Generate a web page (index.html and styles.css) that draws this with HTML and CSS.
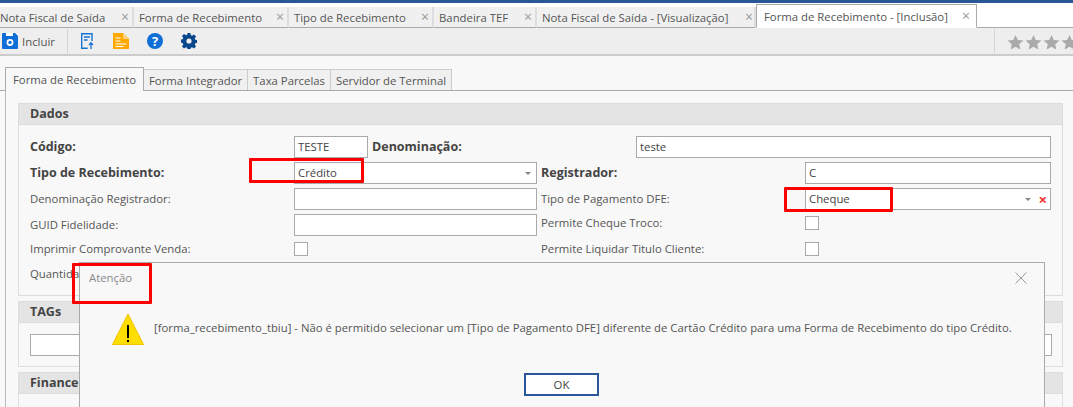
FILE: index.html
```html
<!DOCTYPE html>
<html lang="pt">
<head>
<meta charset="utf-8">
<title>Forma de Recebimento</title>
<link rel="stylesheet" href="styles.css">
</head>
<body>
<div class="app">
  <div class="topbar"></div>
  <nav class="doc-tabs">
    <div class="doc-tab t1"><span>Nota Fiscal de Saída</span><i class="x">×</i></div>
    <div class="doc-tab t2"><span>Forma de Recebimento</span><i class="x">×</i></div>
    <div class="doc-tab t3"><span>Tipo de Recebimento</span><i class="x">×</i></div>
    <div class="doc-tab t4"><span>Bandeira TEF</span><i class="x">×</i></div>
    <div class="doc-tab t5"><span>Nota Fiscal de Saída - [Visualização]</span><i class="x">×</i></div>
    <div class="doc-tab t6 active"><span>Forma de Recebimento - [Inclusão]</span><i class="x">×</i></div>
  </nav>
  <div class="toolbar">
    <button class="tool include">
      <svg width="16" height="16" viewBox="0 0 16 16"><path d="M0 1A1 1 0 0 1 1 0H13l3 3v12a1 1 0 0 1-1 1H1a1 1 0 0 1-1-1z" fill="#0f6fd6"/><rect x="4" y="0" width="7" height="3" fill="#fff"/><circle cx="8" cy="9.500" r="2.600" fill="none" stroke="#fff" stroke-width="1.700"/></svg>
      <span>Incluir</span>
    </button>
    <div class="sep"></div>
    <svg class="ic ic-doc" width="13" height="16" viewBox="0 0 13 16"><path d="M11 8V.7H.7v14.600h6" fill="none" stroke="#1a73d2" stroke-width="1.400"/><path d="M3 4h6M3 7h3.500" stroke="#1a73d2" stroke-width="1.400"/><path d="M10 16V10M8 12l2-2.200 2 2.200" fill="none" stroke="#1a73d2" stroke-width="1.300"/></svg>
    <svg class="ic ic-note" width="16" height="16" viewBox="0 0 16 16"><path d="M0 0h10l6 6v10H0z" fill="#ffa800"/><path d="M10 0v6h6z" fill="#ffd27a"/><path d="M2.500 5h5M2.500 8h5M2.500 11h11M2.500 13.500h8" stroke="#fff" stroke-width="1"/></svg>
    <svg class="ic ic-help" width="16" height="16" viewBox="0 0 16 16"><circle cx="8" cy="8" r="8" fill="#0f6fd6"/><text x="8" y="12.500" text-anchor="middle" class="qm">?</text></svg>
    <svg class="ic ic-gear" width="16" height="16" viewBox="0 0 16 16"><path d="M6.600 0h2.800l.4 2.200 1.300.6 1.900-1.300 2 2-1.300 1.900.6 1.300 2.200.4v2.800l-2.200.4-.6 1.300 1.300 1.900-2 2-1.900-1.300-1.300.6-.4 2.200H6.600l-.4-2.200-1.300-.6-1.900 1.300-2-2 1.300-1.900-.6-1.300L-.5 9.400V6.600l2.200-.4.600-1.300L1 3l2-2 1.900 1.300 1.300-.6z" fill="#08478c"/><circle cx="8" cy="8" r="2.600" fill="#eee"/></svg>
    <div class="spacer"></div>
    <div class="sep sep-right"></div>
    <svg class="stars" width="66" height="14" viewBox="0 0 66 14"><defs><path id="star" d="M8.500 0l2.300 5 5.700.6-4.300 3.700 1.300 5.400-5-2.900-5 2.900 1.300-5.400L.5 5.600 6.200 5z" fill="#aaa"/></defs><use href="#star"/><use href="#star" x="18"/><use href="#star" x="36"/><use href="#star" x="54"/></svg>
  </div>
  <main class="content">
    <div class="form-tabs">
      <div class="form-tab active">Forma de Recebimento</div>
      <div class="form-tab">Forma Integrador</div>
      <div class="form-tab">Taxa Parcelas</div>
      <div class="form-tab">Servidor de Terminal</div>
    </div>
    <div class="pane">
      <section class="panel dados">
        <h2 class="panel-head">Dados</h2>
        <div class="form">
          <div class="row">
            <label class="lbl strong">Código:</label>
            <div class="input code">TESTE</div>
            <label class="lbl strong denom">Denominação:</label>
            <div class="input denom-input">teste</div>
          </div>
          <div class="row">
            <label class="lbl strong">Tipo de Recebimento:</label>
            <div class="input field select">Crédito<i class="caret"></i></div>
            <label class="lbl strong right">Registrador:</label>
            <div class="input field-r">C</div>
          </div>
          <div class="row">
            <label class="lbl">Denominação Registrador:</label>
            <div class="input field"></div>
            <label class="lbl right">Tipo de Pagamento DFE:</label>
            <div class="input field-r select">Cheque<i class="caret clr"></i><i class="clear">×</i></div>
          </div>
          <div class="row">
            <label class="lbl">GUID Fidelidade:</label>
            <div class="input field"></div>
            <label class="lbl right up">Permite Cheque Troco:</label>
            <div class="check-cell"><div class="check"></div></div>
          </div>
          <div class="row">
            <label class="lbl up">Imprimir Comprovante Venda:</label>
            <div class="check-cell left"><div class="check"></div></div>
            <label class="lbl right up">Permite Liquidar Titulo Cliente:</label>
            <div class="check-cell"><div class="check"></div></div>
          </div>
          <div class="row row-last">
            <label class="lbl">Quantidade:</label>
          </div>
        </div>
      </section>
      <section class="panel tags">
        <h2 class="panel-head">TAGs</h2>
        <div class="tags-body"><div class="input tag-input"></div></div>
      </section>
      <section class="panel fin">
        <h2 class="panel-head">Financeiro</h2>
      </section>
    </div>
  </main>
  <div class="dialog">
    <div class="dlg-title">Atenção</div>
    <svg class="dlg-close" width="12" height="12" viewBox="0 0 12 12"><path d="M.5.5l11 11M11.500.5l-11 11" stroke="#999" stroke-width="1"/></svg>
    <div class="dlg-msg">
      <svg class="warn" width="32" height="32" viewBox="0 0 32 32"><path d="M16 1L31.500 31.500H.5z" fill="#ffde00" stroke="#f3c300" stroke-width="1"/><path d="M16 12v13" stroke="#000" stroke-width="2"/><circle cx="16" cy="28" r="1.200" fill="#000"/></svg>
      <p>[forma_recebimento_tbiu] - Não é permitido selecionar um [Tipo de Pagamento DFE] diferente de Cartão Crédito para uma Forma de Recebimento do tipo Crédito.</p>
    </div>
    <div class="dlg-actions"><button class="ok">OK</button></div>
  </div>
  <div class="mark m1"></div>
  <div class="mark m2"></div>
  <div class="mark m3"></div>
</div>
</body>
</html>
```
FILE: styles.css
```css
* { box-sizing: border-box; }
html, body { margin: 0; padding: 0; }
body { width: 1073px; height: 407px; overflow: hidden; background: #f8f8f8; font-family: "Open Sans", "Noto Sans", sans-serif; font-size: 11.350px; color: #444; }
.app { position: relative; width: 1073px; height: 407px; overflow: hidden; }
.topbar { height: 3px; background: #2b579a; }
.doc-tabs { display: flex; align-items: flex-end; height: 25px; background: #fff; border-bottom: 1px solid #aaa; }
.doc-tab { position: relative; height: 21px; margin-bottom: -1px; background: #f0f0f0; border-right: 2px solid #ddd; border-bottom: 1px solid #aaa; display: flex; align-items: center; color: #555; white-space: nowrap; }
.doc-tab .x { position: absolute; right: 3px; top: 2px; font-style: normal; font-size: 14px; line-height: 16px; color: #999; }
.t1 { width: 134px; padding-left: 0; }
.t2 { width: 155px; padding-left: 5px; }
.t3 { width: 145px; padding-left: 5px; }
.t4 { width: 103px; padding-left: 5px; }
.t5 { width: 219px; padding-left: 5px; }
.t5 .x { right: 1px; }
.t6 { width: 221px; padding-left: 7px; height: 24px; background: #fff; border: 1px solid #aaa; border-bottom: 1px solid #fff; }
.t6 .x { top: 3px; right: 6px; }
.toolbar { display: flex; align-items: center; height: 28px; background: #eee; border-bottom: 2px solid #ccc; }
.tool { display: flex; align-items: center; gap: 4px; width: 67px; padding: 0 0 0 2px; margin: 0; border: 0; background: none; font: inherit; color: #555; }
.sep { width: 1px; height: 24px; background: #d4d4d4; }
.ic { flex: none; }
.ic-doc { margin-left: 13px; }
.ic-note { margin-left: 19px; }
.ic-help { margin-left: 18px; }
.ic-gear { margin-left: 18px; }
.qm { font: bold 13px "Open Sans", sans-serif; fill: #fff; }
.spacer { flex: 1; }
.sep-right { margin-right: 12px; }
.stars { flex: none; display: block; margin-top: 2px; }
.content { padding-top: 11px; }
.form-tabs { display: flex; align-items: flex-end; height: 24px; padding-left: 5px; border-bottom: 1px solid #aaa; }
.form-tab { height: 21px; padding: 0 5px; display: flex; align-items: center; background: #f0f0f0; border-right: 1px solid #ccc; border-top: 1px solid #ccc; color: #555; white-space: nowrap; }
.form-tab.active { height: 24px; margin-bottom: -1px; padding: 0 7px; background: #f8f8f8; border: 1px solid #aaa; border-bottom: 0; }
.pane { margin-left: 5px; border-left: 1px solid #bbb; padding: 12px 10px 0 12px; height: 320px; }
.panel { border: 1px solid #ddd; }
.panel-head { margin: 0; height: 21px; padding-left: 11px; background: #e4e4e4; border-bottom: 1px solid #ddd; font-size: 12.500px; font-weight: 700; line-height: 20px; color: #444; }
.dados { height: 193px; }
.tags { margin-top: 5px; height: 66px; }
.fin { margin-top: 5px; height: 60px; }
.form { padding: 11px 0 0 11px; display: flex; flex-direction: column; gap: 4px; }
.row { display: flex; align-items: center; height: 22px; }
.lbl { flex: none; width: 264px; padding-bottom: 2px; color: #555; white-space: nowrap; }
.lbl.strong { font-size: 12.500px; font-weight: 700; color: #444; }
.lbl.up { padding-bottom: 5px; }
.lbl.right { margin-left: 4px; }
.denom { margin-left: 4px; }
.input { position: relative; flex: none; height: 22px; background: #fff; border: 1px solid #aaa; padding-left: 3px; line-height: 20px; color: #444; white-space: nowrap; }
.code { width: 74px; }
.denom-input { width: 415px; }
.field { width: 243px; }
.field-r { width: 246px; }
.tags-body { padding: 11px 10px 0 11px; }
.tag-input { width: 100%; }
.check-cell { flex: none; width: 246px; align-self: flex-start; padding-top: 2px; }
.check-cell.left { width: 243px; }
.check { width: 14px; height: 14px; background: #fff; border: 1px solid #aaa; }
.row-last { align-items: flex-start; }
.caret { position: absolute; right: 5px; top: 9px; width: 0; height: 0; border: 3.500px solid transparent; border-top: 3.500px solid #888; border-bottom: 0; }
.caret.clr { right: 19px; }
.clear { position: absolute; right: 3px; top: 0; font: bold 15px/20px "Open Sans", sans-serif; color: #e33; }
.dialog { position: absolute; left: 79px; top: 262px; width: 966px; height: 150px; background: #f8f8f8; border: 1px solid #aaa; }
.dlg-title { position: absolute; left: 9px; top: 7px; color: #888; }
.dlg-close { position: absolute; right: 17px; top: 9px; }
.dlg-msg { position: absolute; left: 32px; top: 50px; display: flex; align-items: flex-start; gap: 10px; }
.dlg-msg p { margin: 7px 0 0; white-space: nowrap; color: #555; font-size: 11.340px; }
.dlg-actions { position: absolute; left: 444px; top: 110px; }
.ok { width: 75px; height: 23px; padding: 0; background: #fff; border: 2px solid #2b579a; border-radius: 0; font: inherit; color: #444; }
.mark { position: absolute; border: 3px solid #f00; border-radius: 1px; }
.m1 { left: 249px; top: 158px; width: 115px; height: 25px; }
.m2 { left: 784px; top: 187px; width: 109px; height: 25px; }
.m3 { left: 72px; top: 263px; width: 80px; height: 41px; }
```
